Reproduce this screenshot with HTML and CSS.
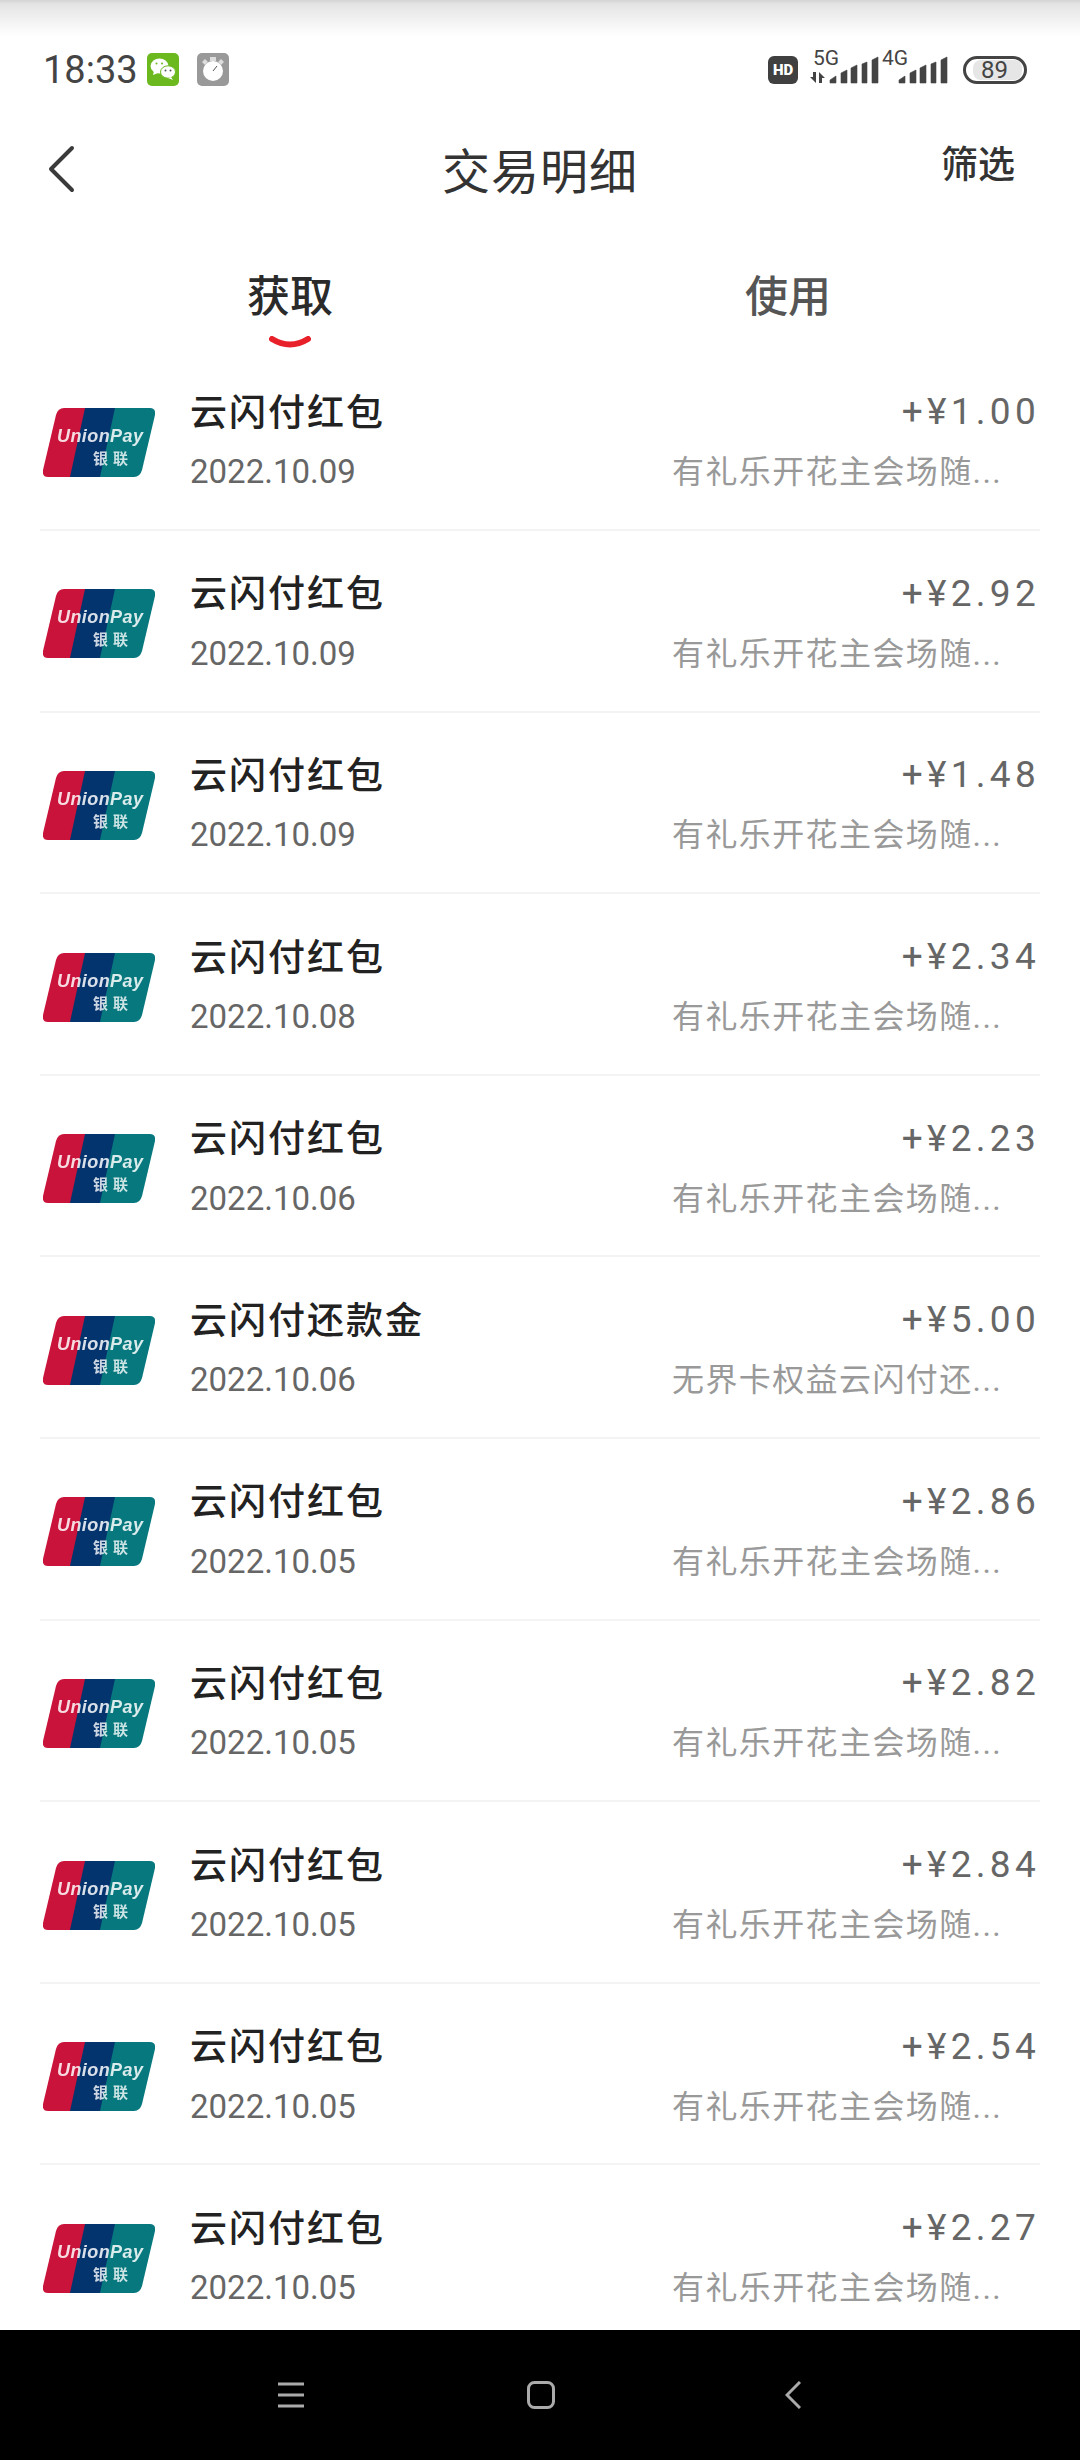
FILE: index.html
```html
<!DOCTYPE html>
<html>
<head>
<title>交易明细</title>
<link rel="stylesheet" href="styles.css">
</head>
<body>
<svg class="defs" width="0" height="0">
  <symbol id="card" viewBox="0 0 112 69">
    <path d="M21 0H44L29 69H5Q-1 69 0 62L13 7Q15 0 21 0Z" fill="#c9133a"/>
    <path d="M42 0H76L60 69H27Z" fill="#04346e"/>
    <path d="M72 0H107Q113 0 112 7L99 62Q97 69 91 69H57Z" fill="#07797e"/>
  </symbol>
</svg>
<div class="page">
  <div class="status">
    <span class="time">18:33</span>
    <svg class="app-icon wechat" viewBox="0 0 32 33">
      <rect width="32" height="33" rx="5" fill="#6bb81f"/>
      <ellipse cx="12.5" cy="13" rx="9" ry="7.5" fill="#fff"/>
      <path d="M7 18l-1 4 5-2z" fill="#fff"/>
      <ellipse cx="21" cy="19" rx="7.5" ry="6.2" stroke="#6bb81f" fill="#fff"/>
      <path d="M24 24l2 3-5-2z" fill="#fff"/>
      <circle cx="9.5" cy="10.5" r="1" fill="#6bb81f"/>
      <circle cx="15" cy="10.5" r="1" fill="#6bb81f"/>
      <circle cx="18.5" cy="17.5" r="1" fill="#555"/>
      <circle cx="23.5" cy="17.5" r="1" fill="#555"/>
    </svg>
    <svg class="app-icon timer" viewBox="0 0 32 33">
      <rect width="32" height="33" rx="5" fill="#999"/>
      <circle cx="16" cy="18" r="10" fill="#fff"/>
      <rect x="13" y="4" width="6" height="4" fill="#ddd"/>
      <path d="M5 9l3-3 3 3-3 3z" fill="#ddd"/>
      <path d="M27 9l-3-3-3 3 3 3z" fill="#ddd"/>
      <path d="M16 18l4-5" stroke="#555" stroke-width="1"/>
    </svg>
    <div class="status-right">
      <span class="hd">HD</span>
      <svg class="signal" width="140" height="42" viewBox="0 0 140 42">
        <text x="3" y="20" class="net">5G</text>
        <text x="72" y="20" class="net">4G</text>
        <path d="M3 27h3v11L0 32h3zM9 27l6 6h-3v5H9z" fill="#444"/>
        <path class="bars" d="M20 38v-3l6-4v7zM31 38V28l6-3v13zM41 38V23l6-3v18zM52 38V19l5-2v21zM62 38V15l6-3v26z"/>
        <path class="bars" d="M89 38v-3l6-4v7zM100 38V28l6-3v13zM110 38V23l6-3v18zM121 38V19l5-2v21zM131 38V15l6-3v26z"/>
      </svg>
      <div class="battery"><span class="battery-level">89</span></div>
    </div>
  </div>

  <div class="header">
    <svg class="back" width="28" height="48" viewBox="0 0 28 48">
      <path d="M25 3L4 24l21 21" fill="none" stroke="#3a3a3a" stroke-width="4" stroke-linecap="round" stroke-linejoin="round"/>
    </svg>
    <div class="title">交易明细</div>
    <div class="filter">筛选</div>
  </div>

  <div class="tabs">
    <div class="tab tab-active">
      <span>获取</span>
      <svg class="smile" width="42" height="13" viewBox="0 0 42 13">
        <path d="M3 3Q21 14 39 3" fill="none" stroke="#e8202a" stroke-width="6" stroke-linecap="round"/>
      </svg>
    </div>
    <div class="tab"><span>使用</span></div>
  </div>

  <div class="list">
    <div class="row">
      <svg class="logo" viewBox="0 0 112 69"><use href="#card"/><text x="14" y="34" textLength="86" class="logo-en">UnionPay</text><text x="70" y="56" class="logo-cn" text-anchor="middle">银联</text></svg>
      <div class="row-main"><div class="name">云闪付红包</div><div class="date">2022.10.09</div></div>
      <div class="row-side"><div class="amount">+¥1.00</div><div class="note">有礼乐开花主会场随...</div></div>
    </div>
    <div class="row">
      <svg class="logo" viewBox="0 0 112 69"><use href="#card"/><text x="14" y="34" textLength="86" class="logo-en">UnionPay</text><text x="70" y="56" class="logo-cn" text-anchor="middle">银联</text></svg>
      <div class="row-main"><div class="name">云闪付红包</div><div class="date">2022.10.09</div></div>
      <div class="row-side"><div class="amount">+¥2.92</div><div class="note">有礼乐开花主会场随...</div></div>
    </div>
    <div class="row">
      <svg class="logo" viewBox="0 0 112 69"><use href="#card"/><text x="14" y="34" textLength="86" class="logo-en">UnionPay</text><text x="70" y="56" class="logo-cn" text-anchor="middle">银联</text></svg>
      <div class="row-main"><div class="name">云闪付红包</div><div class="date">2022.10.09</div></div>
      <div class="row-side"><div class="amount">+¥1.48</div><div class="note">有礼乐开花主会场随...</div></div>
    </div>
    <div class="row">
      <svg class="logo" viewBox="0 0 112 69"><use href="#card"/><text x="14" y="34" textLength="86" class="logo-en">UnionPay</text><text x="70" y="56" class="logo-cn" text-anchor="middle">银联</text></svg>
      <div class="row-main"><div class="name">云闪付红包</div><div class="date">2022.10.08</div></div>
      <div class="row-side"><div class="amount">+¥2.34</div><div class="note">有礼乐开花主会场随...</div></div>
    </div>
    <div class="row">
      <svg class="logo" viewBox="0 0 112 69"><use href="#card"/><text x="14" y="34" textLength="86" class="logo-en">UnionPay</text><text x="70" y="56" class="logo-cn" text-anchor="middle">银联</text></svg>
      <div class="row-main"><div class="name">云闪付红包</div><div class="date">2022.10.06</div></div>
      <div class="row-side"><div class="amount">+¥2.23</div><div class="note">有礼乐开花主会场随...</div></div>
    </div>
    <div class="row">
      <svg class="logo" viewBox="0 0 112 69"><use href="#card"/><text x="14" y="34" textLength="86" class="logo-en">UnionPay</text><text x="70" y="56" class="logo-cn" text-anchor="middle">银联</text></svg>
      <div class="row-main"><div class="name">云闪付还款金</div><div class="date">2022.10.06</div></div>
      <div class="row-side"><div class="amount">+¥5.00</div><div class="note">无界卡权益云闪付还...</div></div>
    </div>
    <div class="row">
      <svg class="logo" viewBox="0 0 112 69"><use href="#card"/><text x="14" y="34" textLength="86" class="logo-en">UnionPay</text><text x="70" y="56" class="logo-cn" text-anchor="middle">银联</text></svg>
      <div class="row-main"><div class="name">云闪付红包</div><div class="date">2022.10.05</div></div>
      <div class="row-side"><div class="amount">+¥2.86</div><div class="note">有礼乐开花主会场随...</div></div>
    </div>
    <div class="row">
      <svg class="logo" viewBox="0 0 112 69"><use href="#card"/><text x="14" y="34" textLength="86" class="logo-en">UnionPay</text><text x="70" y="56" class="logo-cn" text-anchor="middle">银联</text></svg>
      <div class="row-main"><div class="name">云闪付红包</div><div class="date">2022.10.05</div></div>
      <div class="row-side"><div class="amount">+¥2.82</div><div class="note">有礼乐开花主会场随...</div></div>
    </div>
    <div class="row">
      <svg class="logo" viewBox="0 0 112 69"><use href="#card"/><text x="14" y="34" textLength="86" class="logo-en">UnionPay</text><text x="70" y="56" class="logo-cn" text-anchor="middle">银联</text></svg>
      <div class="row-main"><div class="name">云闪付红包</div><div class="date">2022.10.05</div></div>
      <div class="row-side"><div class="amount">+¥2.84</div><div class="note">有礼乐开花主会场随...</div></div>
    </div>
    <div class="row">
      <svg class="logo" viewBox="0 0 112 69"><use href="#card"/><text x="14" y="34" textLength="86" class="logo-en">UnionPay</text><text x="70" y="56" class="logo-cn" text-anchor="middle">银联</text></svg>
      <div class="row-main"><div class="name">云闪付红包</div><div class="date">2022.10.05</div></div>
      <div class="row-side"><div class="amount">+¥2.54</div><div class="note">有礼乐开花主会场随...</div></div>
    </div>
    <div class="row">
      <svg class="logo" viewBox="0 0 112 69"><use href="#card"/><text x="14" y="34" textLength="86" class="logo-en">UnionPay</text><text x="70" y="56" class="logo-cn" text-anchor="middle">银联</text></svg>
      <div class="row-main"><div class="name">云闪付红包</div><div class="date">2022.10.05</div></div>
      <div class="row-side"><div class="amount">+¥2.27</div><div class="note">有礼乐开花主会场随...</div></div>
    </div>
  </div>

  <div class="navbar">
    <svg width="28" height="26" viewBox="0 0 28 26">
      <path d="M1 2h26M1 13h26M1 24h26" stroke="#aaa" stroke-width="3"/>
    </svg>
    <svg width="28" height="28" viewBox="0 0 28 28">
      <rect x="1.5" y="1.5" width="25" height="25" rx="6" fill="none" stroke="#aaa" stroke-width="3"/>
    </svg>
    <svg width="16" height="28" viewBox="0 0 16 28">
      <path d="M15 1L2 14l13 13" fill="none" stroke="#aaa" stroke-width="3"/>
    </svg>
  </div>
</div>
</body>
</html>
```

FILE: styles.css
```css
body {
  margin: 0;
  background: #fff;
  font-family: Roboto, "Noto Sans CJK SC", sans-serif;
}
.defs {
  display: block;
  height: 0;
}
.page {
  width: 1080px;
  height: 2460px;
  display: flex;
  flex-direction: column;
  overflow: hidden;
}

/* status bar */
.status {
  height: 130px;
  flex: none;
  box-sizing: border-box;
  padding: 53px 53px 0 43px;
  display: flex;
  align-items: flex-start;
  background: linear-gradient(#d4d4d4 0, #e4e4e4 4px, #ffffff 36px);
}
.time {
  font-size: 38px;
  line-height: 34px;
  color: #444;
  width: 104px;
}
.app-icon {
  width: 32px;
  height: 33px;
}
.timer {
  margin-left: 18px;
}
.status-right {
  margin-left: auto;
  display: flex;
  align-items: center;
  height: 34px;
}
.hd {
  width: 30px;
  height: 28px;
  border-radius: 6px;
  background: #404040;
  color: #fff;
  font-size: 15px;
  font-weight: 900;
  line-height: 28px;
  text-align: center;
}
.signal {
  margin: -8px 0 0 12px;
}
.net {
  font-size: 21px;
  fill: #444;
  font-family: Roboto, sans-serif;
}
.bars {
  fill: #444;
  stroke: #444;
  stroke-width: 0.6;
}
.battery {
  width: 64px;
  height: 28px;
  margin-left: 13px;
  box-sizing: border-box;
  border: 3px solid #444;
  border-radius: 14px;
  padding: 1px 0 1px 7px;
}
.battery-level {
  display: block;
  width: 49px;
  height: 20px;
  border-radius: 8px;
  background: #e6e6e6;
  color: #444;
  font-size: 24px;
  line-height: 20px;
  text-align: center;
  padding-right: 6px;
  box-sizing: border-box;
}

/* title bar */
.header {
  height: 76px;
  flex: none;
  display: grid;
  grid-template-columns: 1fr auto 1fr;
  align-items: center;
  padding: 0 47px;
}
.back {
  margin-top: 2px;
}
.title {
  font-size: 48px;
  color: #333;
  letter-spacing: 1px;
}
.filter {
  justify-self: end;
  font-size: 37px;
  font-weight: 500;
  color: #333;
  margin: -12px 18px 0 0;
}

.tabs {
  height: 143.5px;
  flex: none;
  box-sizing: border-box;
  padding: 60px 43px 0 41px;
  display: grid;
  grid-template-columns: 1fr 1fr;
}
.tab {
  display: flex;
  flex-direction: column;
  align-items: center;
  font-size: 43px;
  line-height: 62px;
  font-weight: 500;
  color: #555;
}
.tab-active {
  color: #2a2a2a;
}
.smile {
  margin-top: 8px;
}

/* list */
.list {
  flex: 1;
  min-height: 0;
  overflow: hidden;
  padding: 0 40px;
}
.row {
  height: 181.6px;
  box-sizing: border-box;
  border-bottom: 2px solid #f3f3f3;
  padding: 6px 3px 0 3px;
  display: flex;
  align-items: center;
}
.logo {
  width: 112px;
  height: 69px;
  flex: none;
  filter: blur(0.5px);
}
.logo-en {
  font-family: "Liberation Sans", sans-serif;
  font-size: 18px;
  font-weight: bold;
  font-style: italic;
  fill: #fff;
  fill-opacity: 0.85;
}
.logo-cn {
  font-family: "Noto Sans CJK SC", sans-serif;
  font-size: 15px;
  font-weight: 700;
  letter-spacing: 5px;
  fill: #fff;
  fill-opacity: 0.8;
}
.row-main {
  margin-left: 35px;
  padding-top: 1.5px;
}
.name {
  font-size: 37px;
  font-weight: 500;
  line-height: 60px;
  letter-spacing: 2px;
  color: #222;
  margin-bottom: -1.5px;
}
.date {
  font-size: 33px;
  line-height: 60px;
  color: #666;
}
.row-side {
  margin-left: auto;
  width: 365px;
}
.amount {
  font-size: 37px;
  line-height: 60px;
  letter-spacing: 4.3px;
  color: #666;
  text-align: right;
  margin-right: -3px;
}
.note {
  font-size: 32px;
  line-height: 60px;
  letter-spacing: 1.4px;
  color: #999;
  white-space: nowrap;
}

.navbar {
  height: 130px;
  flex: none;
  background: #000;
  display: grid;
  grid-template-columns: 527px 258px 1fr;
  align-items: center;
  justify-items: start;
}
.navbar svg:nth-child(1) {
  margin-left: 277px;
}
```
